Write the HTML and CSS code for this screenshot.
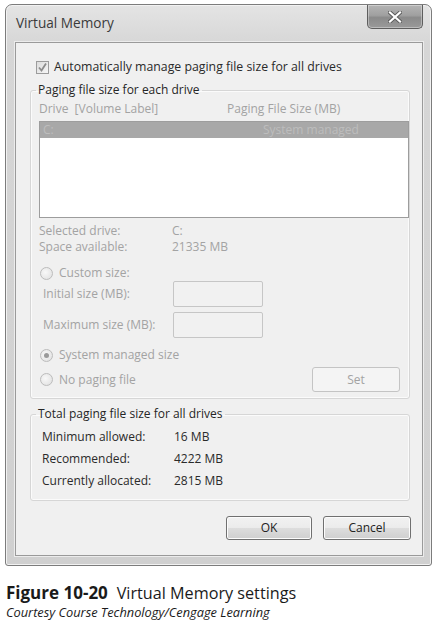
FILE: index.html
```html
<!DOCTYPE html>
<html>
<head>
<meta charset="utf-8">
<link rel="stylesheet" href="styles.css">
</head>
<body>
<div class="window">
  <div class="titlebar">
    <span class="title">Virtual Memory</span>
    <span class="close">
      <svg width="14" height="12" viewBox="0 0 14 12"><path d="M2 1.5 L12 10.5 M12 1.5 L2 10.5" stroke="#5a5a5a" stroke-width="4" stroke-linecap="square"/><path d="M2 1.5 L12 10.5 M12 1.5 L2 10.5" stroke="#ffffff" stroke-width="2.2" stroke-linecap="square"/></svg>
    </span>
  </div>
  <div class="client">
    <div class="check-row">
      <span class="checkbox">
        <svg width="11" height="11" viewBox="0 0 11 11"><path d="M2 5.5 L4.5 8.5 L9 1.5" fill="none" stroke="#8c8c8c" stroke-width="1.8"/></svg>
      </span>
      <span class="check-label">Automatically manage paging file size for all drives</span>
    </div>

    <fieldset class="group group-drives">
      <legend>Paging file size for each drive</legend>
      <div class="cols disabled">
        <span class="col-drive">Drive&nbsp; [Volume Label]</span>
        <span class="col-size">Paging File Size (MB)</span>
      </div>
      <div class="listbox">
        <div class="list-row selected">
          <span class="col-drive">C:</span>
          <span class="col-size-val">System managed</span>
        </div>
      </div>
      <div class="info disabled">
        <div class="info-row"><span class="info-label">Selected drive:</span><span>C:</span></div>
        <div class="info-row"><span class="info-label">Space available:</span><span>21335 MB</span></div>
      </div>
      <div class="radio-row first-radio disabled">
        <span class="radio"></span><span>Custom size:</span>
      </div>
      <div class="field-row disabled">
        <span class="field-label">Initial size (MB):</span><span class="textbox"></span>
      </div>
      <div class="field-row second disabled">
        <span class="field-label">Maximum size (MB):</span><span class="textbox"></span>
      </div>
      <div class="radio-row sys-radio disabled">
        <span class="radio checked"></span><span>System managed size</span>
      </div>
      <div class="set-row disabled">
        <div class="radio-inline"><span class="radio"></span><span>No paging file</span></div>
        <span class="btn btn-set">Set</span>
      </div>
    </fieldset>

    <fieldset class="group group-total">
      <legend>Total paging file size for all drives</legend>
      <div class="total-row"><span class="total-label">Minimum allowed:</span><span>16 MB</span></div>
      <div class="total-row"><span class="total-label">Recommended:</span><span>4222 MB</span></div>
      <div class="total-row"><span class="total-label">Currently allocated:</span><span>2815 MB</span></div>
    </fieldset>

    <div class="buttons">
      <span class="btn btn-ok">OK</span>
      <span class="btn btn-cancel">Cancel</span>
    </div>
  </div>
</div>
<div class="caption">
  <div class="fig"><b>Figure 10-20</b>&nbsp; <span class="fig-title">Virtual Memory settings</span></div>
  <div class="credit">Courtesy Course Technology/Cengage Learning</div>
</div>
</body>
</html>
```
FILE: styles.css
```css
* { box-sizing: border-box; }
html, body { margin: 0; padding: 0; background: #ffffff; }
body {
  font-family: "Open Sans", "Noto Sans", sans-serif;
  font-size: 12px;
  line-height: 16px;
  color: #2a2a2a;
  width: 438px;
  height: 625px;
  overflow: hidden;
}
.window {
  margin: 4px 0 0 5px;
  width: 427px;
  border: 1px solid #7c7c7c;
  border-radius: 7px 7px 3px 3px;
  background: linear-gradient(#e4e4e4 0, #d6d6d6 40px, #d0d0d0 100%);
  box-shadow: inset 0 0 0 1px #f2f2f2;
  padding: 0 8px 9px 9px;
}
.titlebar {
  height: 37px;
  display: flex;
  justify-content: space-between;
  align-items: flex-start;
}
.title {
  margin-top: 10px;
  margin-left: 1px;
  font-size: 13.6px;
  line-height: 16px;
  color: #3a3a3a;
}
.close {
  width: 56px;
  height: 24px;
  border: 1px solid #5e5e5e;
  border-top: none;
  border-radius: 0 0 5px 5px;
  background: linear-gradient(#b4b4b4 0, #a0a0a0 45%, #8a8a8a 55%, #9a9a9a 100%);
  box-shadow: inset 0 0 0 1px rgba(255,255,255,0.35);
  display: flex;
  align-items: center;
  justify-content: center;
}
.client {
  border: 1px solid #9a9a9a;
  background: #f0f0f0;
  box-shadow: 0 0 0 1px #ececec;
  padding: 16px 11px 15px 14px;
}
.check-row {
  display: flex;
  align-items: center;
  height: 16px;
  margin-left: 6px;
  gap: 5px;
}
.check-label { font-size: 12.3px; }
.checkbox {
  width: 13px;
  height: 13px;
  border: 1px solid #9c9c9c;
  background: linear-gradient(135deg, #dcdcdc, #f6f6f6);
  display: flex;
  align-items: center;
  justify-content: center;
}
.group {
  margin: 7px 0 0 0;
  width: 380px;
  border: 1px solid #d6d6d6;
  border-radius: 3px;
  box-shadow: inset 0 0 0 1px #fbfbfb;
  padding: 3px 0 6px 8px;
  min-width: 0;
}
.group legend {
  padding: 0 2px;
  margin-left: -3px;
  line-height: 16px;
  color: #262626;
}
.group-total legend { margin-left: -6px; }
.disabled { color: #a3a3a3; }
.cols, .list-row { display: flex; height: 16px; }
.col-drive { width: 188px; }
.col-size-val { margin-left: 35px; }
.listbox {
  margin-top: 4px;
  height: 97px;
  border: 1px solid #9d9d9d;
  background: #ffffff;
}
.list-row.selected {
  background: #a8a8a8;
  color: #bdbdbd;
  padding-left: 3px;
}
.list-row .col-drive { width: 185px; }
.info { margin-top: 5px; }
.info-row { display: flex; height: 16px; }
.info-label { width: 133px; }
.radio-row { display: flex; align-items: center; height: 16px; }
.first-radio { margin-top: 10px; margin-left: 1px; }
.sys-radio { margin-top: 9px; margin-left: 1px; }
.radio {
  width: 13px;
  height: 13px;
  border-radius: 50%;
  border: 1px solid #bcbcbc;
  background: radial-gradient(circle at 40% 40%, #f8f8f8, #dedede);
  margin-right: 6px;
  display: inline-block;
  position: relative;
  flex: none;
}
.radio.checked::after {
  content: "";
  position: absolute;
  left: 3px;
  top: 3px;
  width: 5px;
  height: 5px;
  border-radius: 50%;
  background: #9a9a9a;
}
.field-row { display: flex; align-items: center; height: 26px; margin-left: 4px; }
.field-row.second { margin-top: 5px; }
.field-label { width: 130px; }
.textbox {
  width: 90px;
  height: 26px;
  border: 1px solid #c6c6c6;
  border-radius: 2px;
  background: #f1f1f1;
}
.set-row {
  display: flex;
  justify-content: space-between;
  align-items: center;
  height: 25px;
  margin-top: 4px;
  margin-right: 9px;
}
.radio-inline { display: flex; align-items: center; margin-left: 1px; }
.btn {
  display: flex;
  align-items: center;
  justify-content: center;
  border-radius: 3px;
}
.btn-set {
  width: 88px;
  height: 25px;
  border: 1px solid #c4c4c4;
  background: #f4f4f4;
  color: #a3a3a3;
}
.group-total {
  padding: 4px 0 8px 11px;
}
.total-row { display: flex; height: 22px; align-items: center; color: #2a2a2a; }
.total-label { width: 132px; }
.buttons {
  display: flex;
  justify-content: flex-end;
  gap: 11px;
  margin-top: 15px;
}
.btn-ok, .btn-cancel {
  height: 24px;
  border: 1px solid #707070;
  background: linear-gradient(#f2f2f2 0, #ebebeb 50%, #dddddd 51%, #cfcfcf 100%);
  box-shadow: inset 0 0 0 1px #fcfcfc;
  color: #222222;
}
.btn-ok { width: 86px; }
.btn-cancel { width: 88px; }
.caption {
  margin: 16px 0 0 6px;
  color: #1a1a1a;
}
.fig {
  font-size: 17px;
  line-height: 22px;
}
.fig b { font-weight: 700; }
.fig-title { font-size: 16.2px; }
.credit {
  font-style: italic;
  font-size: 12.8px;
  line-height: 16px;
}
```
